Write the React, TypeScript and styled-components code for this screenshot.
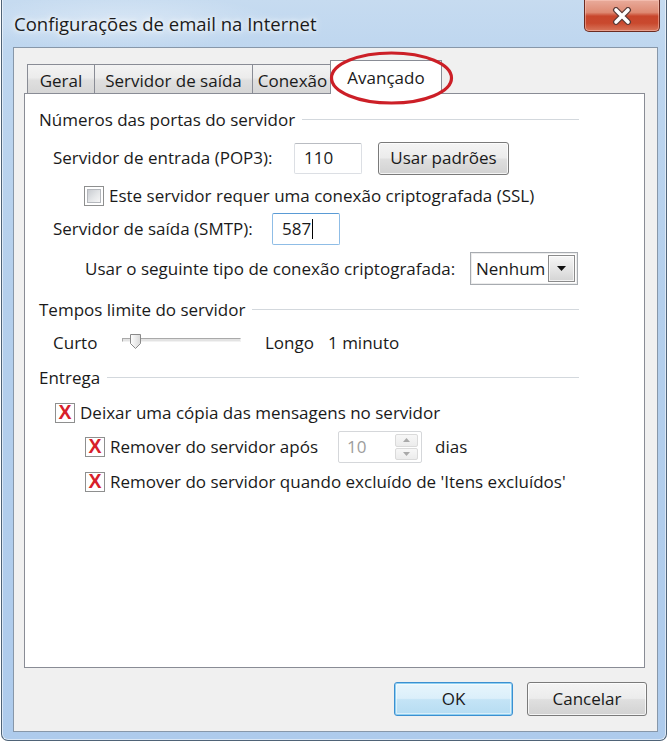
import React from 'react';
import styled, { createGlobalStyle, css } from 'styled-components';

const FONT = `"Open Sans", "Noto Sans", "DejaVu Sans", sans-serif`;

const Global = createGlobalStyle`
  html, body { margin: 0; padding: 0; background: #ffffff; }
  body { font-family: ${FONT}; color: #1a1a1a; }
  * { box-sizing: border-box; }
`;

const Window = styled.div`
  position: relative;
  margin-left: 1px;
  width: 666px;
  height: 741px;
  display: flex;
  flex-direction: column;
  padding: 0 8px 8px 11px;
  border: 1px solid #4f6377;
  border-top: none;
  border-radius: 0 0 7px 7px;
  background:
    radial-gradient(ellipse 220px 40px at 120px 22px, rgba(255,255,255,0.35), rgba(255,255,255,0) 70%),
    linear-gradient(180deg, #c6dbf0 0%, #bed6ef 7%, #b4cfec 40%, #aecbec 100%);
  box-shadow: inset 1px 0 0 rgba(255,255,255,0.55), inset -1px 0 0 rgba(255,255,255,0.55),
    inset 0 -1px 0 rgba(255,255,255,0.55);
`;

const TitleBar = styled.div`
  height: 47px;
  display: flex;
  align-items: flex-start;
  justify-content: space-between;
  flex-shrink: 0;
`;

const Title = styled.div`
  margin-top: 11px;
  margin-left: 1px;
  font-size: 18.5px;
  line-height: 26px;
  color: #1b1b1b;
  text-shadow: 0 0 8px #ffffff, 0 0 4px rgba(255,255,255,0.9);
`;

const CloseButton = styled.div`
  width: 76px;
  height: 32px;
  margin-right: -2px;
  display: flex;
  align-items: center;
  justify-content: center;
  border: 1px solid #6b2a20;
  border-top: none;
  border-radius: 0 0 5px 5px;
  background: linear-gradient(180deg, #e9ab9b 0%, #de8a73 40%, #c8462c 52%, #c9492e 75%, #d8775c 100%);
  box-shadow: inset 0 0 0 1px rgba(255,210,200,0.45);
`;

const Client = styled.div`
  flex: 1;
  min-height: 0;
  display: flex;
  flex-direction: column;
  background: #f0f0f0;
  border: 1px solid #8797a9;
`;

const TabArea = styled.div`
  flex: 1;
  min-height: 0;
  display: flex;
  flex-direction: column;
  padding: 12px 12px 0 10px;
`;

const TabStrip = styled.div`
  position: relative;
  z-index: 2;
  height: 34px;
  margin-bottom: -1px;
  padding-left: 3px;
  display: flex;
  align-items: flex-end;
  flex-shrink: 0;
`;

const Tab = styled.div<{ $w: number; $active?: boolean; $first?: boolean }>`
  position: relative;
  width: ${(p) => p.$w}px;
  display: flex;
  align-items: center;
  justify-content: center;
  font-size: 17px;
  line-height: 22px;
  white-space: nowrap;
  border: 1px solid #898c95;
  border-bottom: none;
  color: #1a1a1a;
  ${(p) =>
    p.$active
      ? css`
          height: 34px;
          margin-left: -3px;
          background: #ffffff;
          z-index: 2;
          padding-bottom: 0;
        `
      : css`
          height: 29px;
          margin-bottom: 1px;
          margin-left: ${p.$first ? 0 : -1}px;
          padding-top: 3px;
          background: linear-gradient(180deg, #f3f3f3 0%, #ececec 45%, #dfdfdf 55%, #d6d6d6 100%);
        `}
`;

const Ellipse = styled.svg`
  position: absolute;
  left: -2px;
  top: -10px;
  pointer-events: none;
`;

const Panel = styled.div`
  flex: 1;
  min-height: 0;
  display: flex;
  flex-direction: column;
  background: #ffffff;
  border: 1px solid #898c95;
  padding: 15px 65px 0 14px;
  font-size: 17px;
`;

const GroupHeader = styled.div<{ $mt?: number }>`
  height: 22px;
  margin-top: ${(p) => p.$mt ?? 0}px;
  display: flex;
  align-items: center;
  line-height: 22px;
  white-space: nowrap;
`;

const GroupLine = styled.div`
  flex: 1;
  height: 1px;
  margin-left: 7px;
  margin-top: -1px;
  background: #d3d8dd;
`;

const Row = styled.div<{ $mt: number; $ml: number; $h: number }>`
  height: ${(p) => p.$h}px;
  margin-top: ${(p) => p.$mt}px;
  margin-left: ${(p) => p.$ml}px;
  display: flex;
  align-items: center;
  line-height: 22px;
  white-space: nowrap;
`;

const Label = styled.span<{ $w?: number; $ml?: number }>`
  display: inline-block;
  flex-shrink: 0;
  ${(p) => (p.$w ? `width: ${p.$w}px;` : '')}
  margin-left: ${(p) => p.$ml ?? 0}px;
`;

const TextBox = styled.div<{ $w: number; $h: number; $focus?: boolean }>`
  width: ${(p) => p.$w}px;
  height: ${(p) => p.$h}px;
  display: flex;
  align-items: center;
  padding-left: 9px;
  background: #ffffff;
  border: 1px solid ${(p) => (p.$focus ? '#8fbde6' : '#dcdfe4')};
  border-top-color: ${(p) => (p.$focus ? '#5a9bd5' : '#b9bcc2')};
  border-radius: 2px;
  font-size: 17px;
`;

const Caret = styled.span`
  display: inline-block;
  width: 1px;
  height: 20px;
  margin-left: 1px;
  background: #000;
`;

const PushButton = styled.div<{ $w: number; $h: number; $default?: boolean; $ml?: number }>`
  width: ${(p) => p.$w}px;
  height: ${(p) => p.$h}px;
  margin-left: ${(p) => p.$ml ?? 0}px;
  display: flex;
  align-items: center;
  justify-content: center;
  font-size: 17px;
  line-height: 22px;
  color: #1a1a1a;
  border-radius: 3px;
  ${(p) =>
    p.$default
      ? css`
          border: 1px solid #3c8fd0;
          background: linear-gradient(180deg, #e8f5fc 0%, #dbeffa 48%, #c4e4f6 52%, #b6dcf2 100%);
          box-shadow: inset 0 0 0 1px #8fd0f2, inset 0 0 0 2px rgba(255, 255, 255, 0.5);
        `
      : css`
          border: 1px solid #7a7a7a;
          background: linear-gradient(180deg, #f4f4f4 0%, #ececec 48%, #dfdfdf 52%, #d2d2d2 100%);
          box-shadow: inset 0 0 0 1px rgba(255, 255, 255, 0.75);
        `}
`;

const CheckBox = styled.div<{ $checked?: boolean }>`
  position: relative;
  width: 20px;
  height: 20px;
  flex-shrink: 0;
  display: flex;
  align-items: center;
  justify-content: center;
  border: 1px solid #8e8f8f;
  background: #ffffff;
  font-family: "Liberation Sans", Arial, sans-serif;
  font-weight: bold;
  font-size: 19.5px;
  line-height: 1;
  color: #d7202a;
  ${(p) =>
    !p.$checked &&
    css`
      &::after {
        content: '';
        position: absolute;
        inset: 2px;
        border: 1px solid #b4b7bc;
        background: linear-gradient(135deg, #c9ccd1 0%, #e4e6e8 55%, #f6f6f6 100%);
      }
    `}
`;

const CheckText = styled.span`
  margin-left: 5px;
`;

const Select = styled.div`
  width: 108px;
  height: 33px;
  display: flex;
  align-items: center;
  justify-content: space-between;
  padding: 2px 2px 2px 5px;
  background: #ffffff;
  border: 1px solid #a7abb0;
  box-shadow: inset 0 0 0 1px #ececec;
`;

const DropButton = styled.div`
  width: 27px;
  height: 27px;
  display: flex;
  align-items: center;
  justify-content: center;
  border: 1px solid #8b8b8b;
  background: linear-gradient(180deg, #f6f6f6 0%, #e6e6e6 50%, #d4d4d4 100%);
  box-shadow: inset 0 0 0 1px rgba(255, 255, 255, 0.7);
`;

const SliderTrack = styled.div`
  position: relative;
  width: 119px;
  height: 4px;
  flex-shrink: 0;
  border-top: 1px solid #a9a9a9;
  border-left: 1px solid #a9a9a9;
  border-bottom: 1px solid #f2f2f2;
  border-right: 1px solid #f2f2f2;
  background: #e3e3e3;
  margin-top: -6px;
`;

const Thumb = styled.svg`
  position: absolute;
  left: 7px;
  top: -5px;
`;

const Spinner = styled.div`
  width: 84px;
  height: 32px;
  display: flex;
  align-items: center;
  justify-content: space-between;
  padding: 2px 3px 2px 8px;
  background: #ffffff;
  border: 1px solid #d5d7da;
  border-radius: 2px;
  color: #9d9d9d;
`;

const SpinButtons = styled.div`
  width: 23px;
  height: 26px;
  display: flex;
  flex-direction: column;
  gap: 1px;
`;

const SpinButton = styled.div`
  flex: 1;
  display: flex;
  align-items: center;
  justify-content: center;
  border: 1px solid #dadada;
  border-radius: 2px;
  background: linear-gradient(180deg, #f7f7f7 0%, #ececec 100%);
`;

const ButtonRow = styled.div`
  display: flex;
  justify-content: flex-end;
  gap: 14px;
  padding: 14px 10px 15px 0;
  flex-shrink: 0;
`;

const Tri = ({ up }: { up?: boolean }) => (
  <svg width="7" height="4" viewBox="0 0 7 4">
    <path d={up ? 'M0 4 L3.5 0 L7 4 Z' : 'M0 0 L3.5 4 L7 0 Z'} fill="#a9a9a9" />
  </svg>
);

export default function App() {
  return (
    <>
      <Global />
      <Window>
        <TitleBar>
          <Title>Configurações de email na Internet</Title>
          <CloseButton>
            <svg width="20" height="18" viewBox="0 0 20 18">
              <path d="M4 3 L16 15 M16 3 L4 15" stroke="#5a3a36" strokeWidth="6" strokeLinecap="round" />
              <path d="M4 3 L16 15 M16 3 L4 15" stroke="#ffffff" strokeWidth="3.6" strokeLinecap="round" />
            </svg>
          </CloseButton>
        </TitleBar>
        <Client>
          <TabArea>
            <TabStrip>
              <Tab $w={68} $first>
                Geral
              </Tab>
              <Tab $w={159}>Servidor de saída</Tab>
              <Tab $w={81}>Conexão</Tab>
              <Tab $w={112} $active>
                Avançado
                <Ellipse width="126" height="56" viewBox="0 0 126 56">
                  <ellipse cx="62.5" cy="27" rx="60" ry="25" fill="none" stroke="#cc1f27" strokeWidth="3.2" />
                </Ellipse>
              </Tab>
            </TabStrip>
            <Panel>
              <GroupHeader>
                Números das portas do servidor
                <GroupLine />
              </GroupHeader>
              <Row $mt={11} $ml={14} $h={32}>
                <Label $w={241}>Servidor de entrada (POP3):</Label>
                <TextBox $w={68} $h={31}>110</TextBox>
                <PushButton $w={131} $h={33} $ml={16}>
                  Usar padrões
                </PushButton>
              </Row>
              <Row $mt={11} $ml={45} $h={21}>
                <CheckBox />
                <CheckText>Este servidor requer uma conexão criptografada (SSL)</CheckText>
              </Row>
              <Row $mt={7} $ml={14} $h={32}>
                <Label $w={219}>Servidor de saída (SMTP):</Label>
                <TextBox $w={68} $h={32} $focus>
                  587
                  <Caret />
                </TextBox>
              </Row>
              <Row $mt={7} $ml={46} $h={33}>
                <Label $w={385}>Usar o seguinte tipo de conexão criptografada:</Label>
                <Select>
                  <span>Nenhum</span>
                  <DropButton>
                    <svg width="9" height="5" viewBox="0 0 9 5">
                      <path d="M0 0 L4.5 5 L9 0 Z" fill="#111" />
                    </svg>
                  </DropButton>
                </Select>
              </Row>
              <GroupHeader $mt={14}>
                Tempos limite do servidor
                <GroupLine />
              </GroupHeader>
              <Row $mt={11} $ml={14} $h={22}>
                <Label $w={69}>Curto</Label>
                <SliderTrack>
                  <Thumb width="11" height="15" viewBox="0 0 11 15">
                    <defs>
                      <linearGradient id="thumbg" x1="0" y1="0" x2="1" y2="0">
                        <stop offset="0" stopColor="#ffffff" />
                        <stop offset="1" stopColor="#d9d9d9" />
                      </linearGradient>
                    </defs>
                    <path d="M0.5 0.5 H10.5 V9.5 L5.5 14.5 L0.5 9.5 Z" fill="url(#thumbg)" stroke="#8a8a8a" />
                  </Thumb>
                </SliderTrack>
                <Label $w={63} $ml={24}>
                  Longo
                </Label>
                <Label>1 minuto</Label>
              </Row>
              <GroupHeader $mt={13}>
                Entrega
                <GroupLine />
              </GroupHeader>
              <Row $mt={14} $ml={16} $h={20}>
                <CheckBox $checked>X</CheckBox>
                <CheckText>Deixar uma cópia das mensagens no servidor</CheckText>
              </Row>
              <Row $mt={8} $ml={46} $h={32}>
                <CheckBox $checked>X</CheckBox>
                <Label $w={228} $ml={5}>
                  Remover do servidor após
                </Label>
                <Spinner>
                  <span>10</span>
                  <SpinButtons>
                    <SpinButton>
                      <Tri up />
                    </SpinButton>
                    <SpinButton>
                      <Tri />
                    </SpinButton>
                  </SpinButtons>
                </Spinner>
                <Label $ml={13}>dias</Label>
              </Row>
              <Row $mt={9} $ml={46} $h={20}>
                <CheckBox $checked>X</CheckBox>
                <CheckText>Remover do servidor quando excluído de 'Itens excluídos'</CheckText>
              </Row>
            </Panel>
          </TabArea>
          <ButtonRow>
            <PushButton $w={119} $h={34} $default>
              OK
            </PushButton>
            <PushButton $w={120} $h={34}>
              Cancelar
            </PushButton>
          </ButtonRow>
        </Client>
      </Window>
    </>
  );
}
